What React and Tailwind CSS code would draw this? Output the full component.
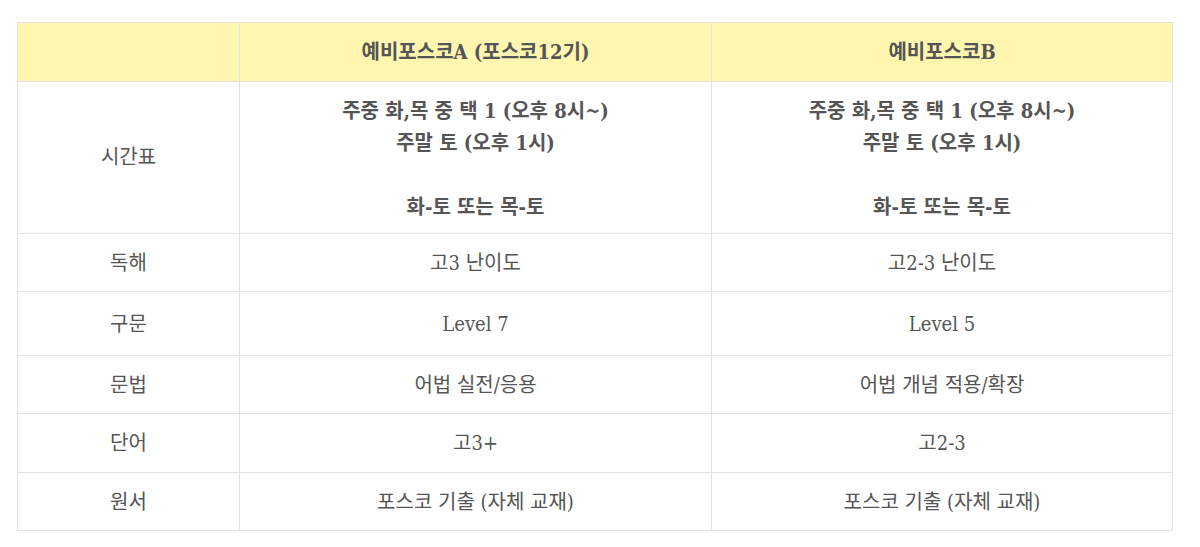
const rows = [
  { label: '독해', a: '고3 난이도', b: '고2-3 난이도', h: 'h-[58px]' },
  { label: '구문', a: 'Level 7', b: 'Level 5', h: 'h-[64px]' },
  { label: '문법', a: '어법 실전/응용', b: '어법 개념 적용/확장', h: 'h-[58px]' },
  { label: '단어', a: '고3+', b: '고2-3', h: 'h-[59px]' },
  { label: '원서', a: '포스코 기출 (자체 교재)', b: '포스코 기출 (자체 교재)', h: 'h-[58px]' },
]

function Schedule() {
  return (
    <div className="font-bold leading-[32px]">
      <div>주중 화,목 중 택 1 (오후 8시~)</div>
      <div>주말 토 (오후 1시)</div>
      <div>&nbsp;</div>
      <div>화-토 또는 목-토</div>
    </div>
  )
}

export default function App() {
  return (
    <div className="min-h-[547px] bg-white pt-[22px] pl-[17px]">
      <table
        className="border-collapse text-[20px] leading-[28px] text-[#555] text-center"
        style={{ fontFamily: '"DejaVu Serif Condensed", "Noto Sans CJK KR", serif' }}
      >
        <colgroup>
          <col className="w-[222px]" />
          <col className="w-[472px]" />
          <col className="w-[461px]" />
        </colgroup>
        <thead>
          <tr className="h-[59px] bg-[#fff6b0] font-bold">
            <th className="border border-[#e2e2e2]"></th>
            <th className="border border-[#e2e2e2]">예비포스코A (포스코12기)</th>
            <th className="border border-[#e2e2e2]">예비포스코B</th>
          </tr>
        </thead>
        <tbody>
          <tr className="h-[152px]">
            <td className="border border-[#e2e2e2] pb-[2px]">시간표</td>
            <td className="border border-[#e2e2e2] pt-[2px]"><Schedule /></td>
            <td className="border border-[#e2e2e2] pt-[2px]"><Schedule /></td>
          </tr>
          {rows.map((r) => (
            <tr key={r.label} className={r.h}>
              <td className="border border-[#e2e2e2]">{r.label}</td>
              <td className="border border-[#e2e2e2]">{r.a}</td>
              <td className="border border-[#e2e2e2]">{r.b}</td>
            </tr>
          ))}
        </tbody>
      </table>
    </div>
  )
}
